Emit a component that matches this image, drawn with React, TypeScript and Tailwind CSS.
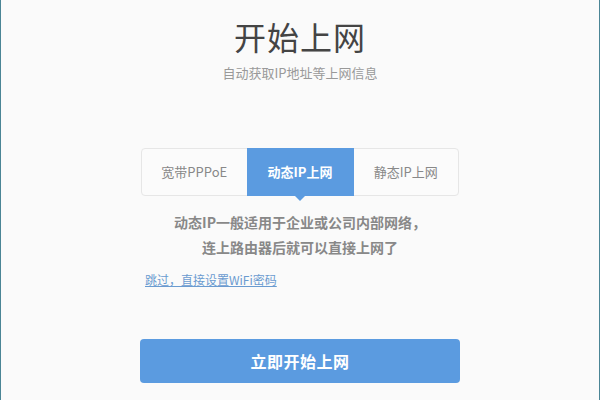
import * as React from 'react';

const tabs = ['宽带PPPoE', '动态IP上网', '静态IP上网'];

const App: React.FunctionComponent = () => {
  const active = 1;
  return (
    <div
      className="w-[600px] h-[400px] bg-[#fafafa] border-l border-r border-[#4a8595] flex flex-col items-center overflow-hidden"
      style={{ fontFamily: '"Noto Sans CJK SC", "Noto Sans", sans-serif' }}
    >
      <h1 className="pt-[16px] text-[32px] leading-[40px] text-[#444] tracking-[1px]">开始上网</h1>
      <p className="mt-[7px] text-[13px] leading-[20px] text-[#999]">自动获取IP地址等上网信息</p>

      <div className="mt-[65px] w-[318px] h-[48px] flex border border-[#e6e6e6] rounded-[4px] bg-[#fbfbfb]">
        {tabs.map((t, i) => (
          <div
            key={t}
            className={
              i === active
                ? 'relative w-[107px] -my-px flex justify-center items-center bg-[#5b9be0] text-white text-[13px] font-bold'
                : 'flex-1 flex justify-center items-center text-[#888] text-[13px]'
            }
          >
            {t}
            {i === active && (
              <span className="absolute left-1/2 -translate-x-1/2 top-full w-0 h-0 border-l-[5px] border-r-[5px] border-t-[5px] border-l-transparent border-r-transparent border-t-[#5b9be0]" />
            )}
          </div>
        ))}
      </div>

      <div className="mt-[14px] text-center text-[14px] leading-[25px] font-bold text-[#888]">
        <p>动态IP一般适用于企业或公司内部网络，</p>
        <p>连上路由器后就可以直接上网了</p>
      </div>

      <div className="w-[320px] mt-[12px] pl-[5px] text-[12px] leading-[16px]">
        <a className="text-[#6a9bd0] underline">跳过，直接设置WiFi密码</a>
      </div>

      <button className="mt-[51px] w-[320px] h-[44px] rounded-[4px] bg-[#5b9be0] text-white text-[16px] font-bold tracking-[0.5px]">
        立即开始上网
      </button>
    </div>
  );
};

export default App;
